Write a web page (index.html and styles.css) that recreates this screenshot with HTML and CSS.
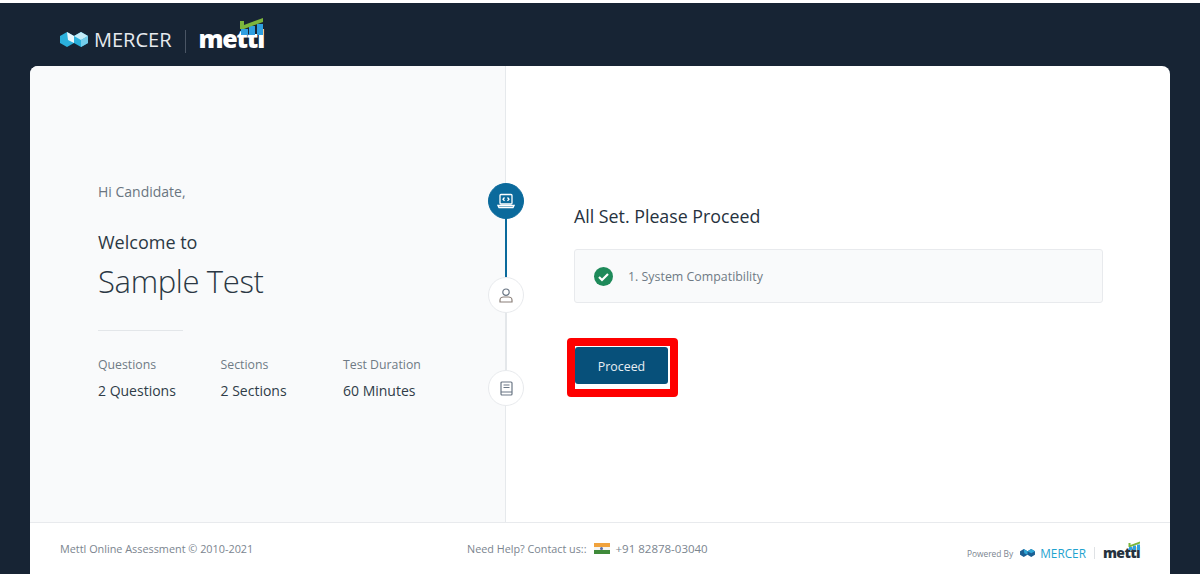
FILE: index.html
```html
<!DOCTYPE html>
<html lang="en">
<head>
    <meta charset="UTF-8">
    <title>Sample Test</title>
    <link rel="stylesheet" href="styles.css">
</head>
<body>
    <div class="screen">
        <!-- Logos -->
        <header class="top-bar">
            <svg class="mercer-icon" width="28" height="15" viewBox="0 0 28 15">
                <path d="M0 4L7 0L14 4L21 0L28 4V11L21 15L14 11L7 15L0 11Z" fill="#2bb0dc"/>
                <path d="M7 0L14 4V11L8 8Z" fill="#e8f7fc"/>
                <path d="M21 0L28 4L21 8L14 4Z" fill="#c4ebf7"/>
                <path d="M21 8L28 4V11L21 15Z" fill="#74cdea"/>
            </svg>
            <span class="mercer-name">MERCER</span>
            <span class="logo-line"></span>
            <span class="mettl-name">mettl<svg class="mettl-bars" width="26" height="32" viewBox="0 0 26 32">
                <path d="M2 14h7v6H2zM10 11h6v9h-6zM18 9h6v11h-6z" fill="#2f9fe0"/>
                <path d="M1 6H5V10L24 3V7L5 14H1Z" fill="#7cb53c"/>
            </svg></span>
        </header>

        <div class="card">
            <div class="card-main">
                <section class="intro">
                    <p class="hello">Hi Candidate,</p>
                    <p class="welcome">Welcome to</p>
                    <h1>Sample Test</h1>
                    <hr>
                    <div class="facts">
                        <div class="fact fact-q">
                            <span class="fact-label">Questions</span>
                            <span class="fact-value">2 Questions</span>
                        </div>
                        <div class="fact fact-s">
                            <span class="fact-label">Sections</span>
                            <span class="fact-value">2 Sections</span>
                        </div>
                        <div class="fact">
                            <span class="fact-label">Test Duration</span>
                            <span class="fact-value">60 Minutes</span>
                        </div>
                    </div>
                </section>

                <!-- Step rail sits over the divider -->
                <div class="rail">
                    <span class="rail-done"></span>
                    <span class="rail-todo"></span>
                    <span class="step step-active step-1">
                        <svg width="18" height="16" viewBox="0 0 18 16" fill="none" stroke="#fff" stroke-width="1.3">
                            <rect x="3" y="1.5" width="12" height="9.5" rx="1"/>
                            <path d="M1 12.5h16l-1 2H2z"/>
                            <path d="M7.5 4.5L6 6.2l1.500 1.700M10.500 4.500L12 6.200l-1.500 1.700"/>
                        </svg>
                    </span>
                    <span class="step step-2">
                        <svg width="14" height="15" viewBox="0 0 14 15" fill="none" stroke="#6b7785" stroke-width="1.2">
                            <circle cx="7" cy="4.200" r="3.200"/>
                            <path d="M1 14v-2c0-2 2-3 3.500-3h5c1.500 0 3.500 1 3.500 3v2z" stroke="#8a7f78"/>
                        </svg>
                    </span>
                    <span class="step step-3">
                        <svg width="13" height="15" viewBox="0 0 13 15" fill="none" stroke="#6b7785" stroke-width="1.2">
                            <rect x="1" y="1" width="11" height="13" rx="1"/>
                            <path d="M1 11h11M3.500 4h6M3.500 6.500h6"/>
                        </svg>
                    </span>
                </div>

                <section class="status">
                    <h2>All Set. Please Proceed</h2>
                    <div class="check-row">
                        <svg width="19" height="19" viewBox="0 0 19 19">
                            <circle cx="9.500" cy="9.500" r="9.500" fill="#1e8a5a"/>
                            <path d="M5 10l3 3 6-6" fill="none" stroke="#fff" stroke-width="2.200"/>
                        </svg>
                        <span class="check-text">1. System Compatibility</span>
                    </div>
                    <div class="marked">
                        <button class="proceed">Proceed</button>
                    </div>
                </section>
            </div>

            <footer class="foot">
                <span class="copy">Mettl Online Assessment © 2010-2021</span>
                <div class="help">
                    <span class="help-text">Need Help? Contact us::</span>
                    <span class="flag"><i></i></span>
                    <span class="phone">+91 82878-03040</span>
                </div>
                <div class="powered">
                    <span class="powered-by">Powered By</span>
                    <svg width="15" height="8" viewBox="0 0 28 15">
                        <path d="M0 4L7 0L14 4L21 0L28 4V11L21 15L14 11L7 15L0 11Z" fill="#1b5f93"/>
                        <path d="M21 0L28 4L21 8L14 4Z M7 0L14 4V11L8 8Z" fill="#2fa6d6"/>
                    </svg>
                    <span class="powered-mercer">MERCER</span>
                    <span class="powered-line"></span>
                    <span class="powered-mettl">mettl<svg class="powered-bars" width="13" height="16" viewBox="0 0 26 32">
                        <path d="M2 14h7v6H2zM10 11h6v9h-6zM18 9h6v11h-6z" fill="#2f9fe0"/>
                        <path d="M1 6H5V10L24 3V7L5 14H1Z" fill="#7cb53c"/>
                    </svg></span>
                </div>
            </footer>
        </div>
    </div>
</body>
</html>
```

FILE: styles.css
```css
* {
    box-sizing: border-box;
}
html, body {
    margin: 0;
    height: 100%;
    overflow: hidden;
    background-color: #fff;
}
body {
    font-family: "Open Sans", sans-serif;
    padding-top: 3px;
}
.screen {
    width: 1200px;
    height: 571px;
    padding: 0 30px;
    background-color: #172434;
}

/* top bar */
.top-bar {
    height: 63px;
    padding-left: 30px;
    display: flex;
    align-items: center;
}
.mercer-icon {
    margin-top: 10px;
}
.mercer-name {
    margin: 10px 0 0 6px;
    font-size: 20px;
    color: #e6eaee;
}
.logo-line {
    width: 1px;
    height: 23px;
    margin: 14px 13px 0 13px;
    background-color: #4a5564;
}
.mettl-name {
    position: relative;
    margin-top: 6px;
    font-size: 25px;
    font-weight: 800;
    line-height: 30px;
    letter-spacing: -1.2px;
    color: #fff;
}
.mettl-bars {
    position: absolute;
    right: -1px;
    top: -8px;
}

/* card */
.card {
    height: 508px;
    display: flex;
    flex-direction: column;
    background-color: #fff;
    border-radius: 8px 8px 0 0;
    overflow: hidden;
}
.card-main {
    position: relative;
    flex: 1;
    display: flex;
}
.intro {
    width: 476px;
    padding: 116px 0 0 68px;
    background-color: #f9fafb;
    border-right: 1px solid #e6e9ec;
}
.hello {
    margin: 0;
    font-size: 14px;
    line-height: 19px;
    color: #6a7580;
}
.welcome {
    margin: 29px 0 0;
    font-size: 18px;
    line-height: 24px;
    color: #2b3844;
}
h1 {
    margin: 5px 0 0;
    font-size: 31px;
    font-weight: 300;
    line-height: 44px;
    letter-spacing: -0.35px;
    color: #2b3844;
}
hr {
    width: 85px;
    margin: 27px 0 0;
    border: none;
    border-top: 1px solid #e3e6e9;
}
.facts {
    display: flex;
    margin-top: 25px;
}
.fact {
    display: flex;
    flex-direction: column;
    gap: 7px;
}
.fact-q, .fact-s {
    width: 122.5px;
}
.fact-label {
    font-size: 12.3px;
    line-height: 18px;
    color: #6f7a85;
}
.fact-value {
    font-size: 14px;
    line-height: 20px;
    color: #2f3c48;
}

/* steps */
.rail {
    position: absolute;
    left: 458px;
    top: 0;
    width: 36px;
    height: 100%;
}
.rail-done, .rail-todo {
    position: absolute;
    left: 17px;
    width: 2px;
}
.rail-done {
    top: 134px;
    height: 78px;
    background-color: #0b6a9c;
}
.rail-todo {
    top: 212px;
    height: 95px;
    background-color: #e4e7ea;
}
.step {
    position: absolute;
    left: 0;
    width: 36px;
    height: 36px;
    display: flex;
    align-items: center;
    justify-content: center;
    border-radius: 50%;
    background-color: #fff;
    border: 1px solid #e8eaed;
}
.step-active {
    background-color: #0b6a9c;
    border-color: #0b6a9c;
}
.step-1 { top: 117px; }
.step-2 { top: 211px; }
.step-3 { top: 304px; }

/* right side */
.status {
    flex: 1;
    padding: 138px 67px 0 68px;
}
h2 {
    margin: 0;
    font-size: 17.8px;
    font-weight: 400;
    line-height: 24px;
    color: #26323e;
}
.check-row {
    height: 54px;
    margin-top: 21px;
    padding-left: 19px;
    display: flex;
    align-items: center;
    gap: 15px;
    background-color: #f9fafb;
    border: 1px solid #e8eaed;
    border-radius: 3px;
    font-size: 12.4px;
    color: #6f7a85;
}
.check-text {
    padding-top: 1px;
}
.marked {
    width: 111px;
    height: 59px;
    margin: 35px 0 0 -7px;
    padding-top: 1px;
    background-color: #fff;
    border: 8px solid #fe0000;
    border-radius: 4px;
}
.proceed {
    display: block;
    width: 93px;
    height: 37px;
    padding: 2px 0 0;
    font-family: inherit;
    font-size: 12.4px;
    color: #e8eef3;
    background-color: #07507a;
    border: none;
    border-radius: 3px;
}

/* footer */
.foot {
    height: 52px;
    padding: 0 30px;
    display: grid;
    grid-template-columns: 407px 1fr auto;
    align-items: center;
    background-color: #fff;
    border-top: 1px solid #e8eaed;
    font-size: 10.85px;
    color: #7b858f;
}
.help {
    display: flex;
    align-items: center;
}
.help-text {
    font-size: 10.8px;
}
.flag {
    width: 16px;
    height: 11px;
    margin: 0 6px 0 7px;
    display: flex;
    align-items: center;
    justify-content: center;
    background: linear-gradient(#f0a23c 33%, #f4f4f2 33%, #f4f4f2 66%, #3f8a3a 66%);
}
.flag i {
    width: 3px;
    height: 3px;
    border-radius: 50%;
    background-color: #5a6aa0;
}
.phone {
    margin-top: -1px;
    font-size: 11.5px;
}
.powered {
    display: flex;
    align-items: center;
    margin-top: 9px;
}
.powered-by {
    font-size: 8.4px;
    margin-right: 7px;
}
.powered-mercer {
    margin-left: 5px;
    font-size: 11.8px;
    color: #1fa3cf;
}
.powered-line {
    width: 1px;
    height: 12px;
    margin: 0 8px;
    background-color: #dfe2e5;
}
.powered-mettl {
    position: relative;
    font-size: 14px;
    font-weight: 800;
    line-height: 16px;
    letter-spacing: -0.6px;
    color: #26323e;
}
.powered-bars {
    position: absolute;
    right: -1px;
    top: -5px;
}
```
